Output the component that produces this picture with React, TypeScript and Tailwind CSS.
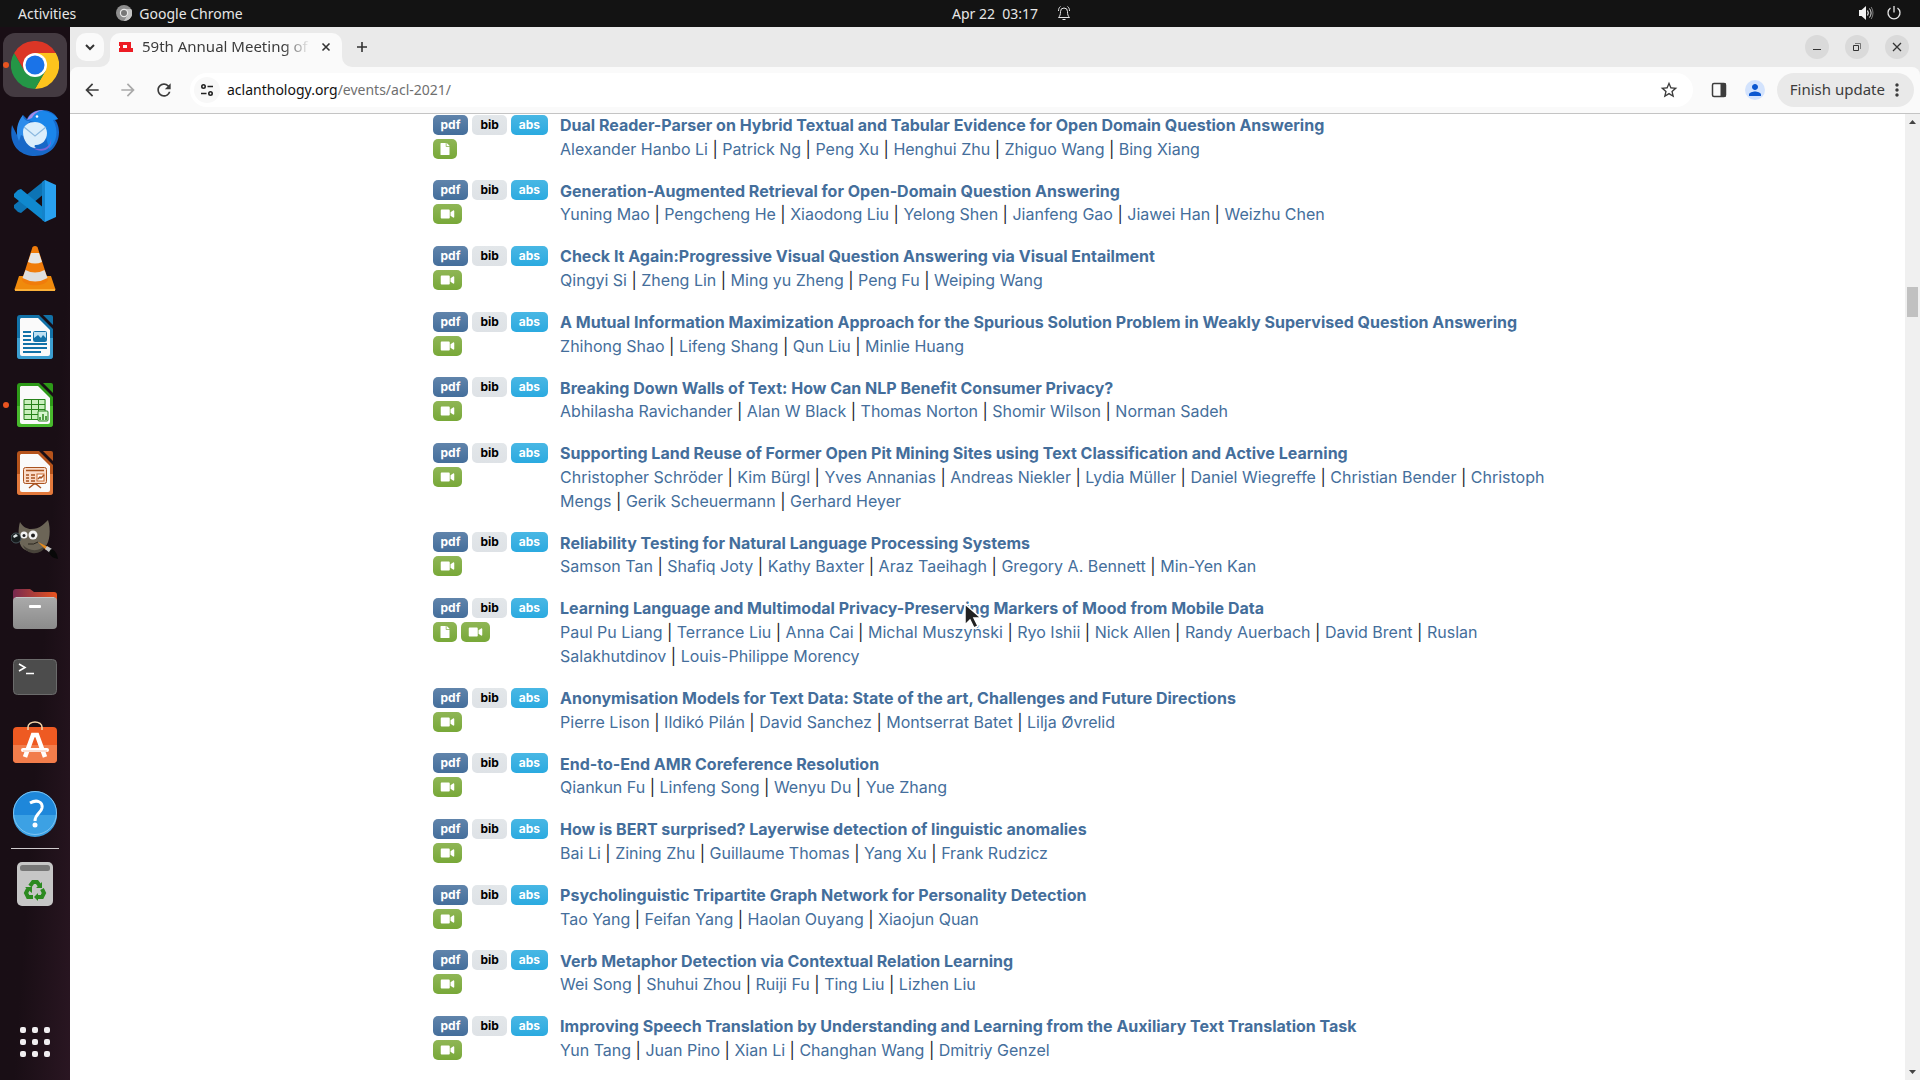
import { Fragment } from "react";
import type { ReactNode } from "react";
import { FaFile, FaVideo } from "react-icons/fa";
import { MdArrowBack, MdArrowForward, MdRefresh, MdStarBorder, MdPerson, MdMoreVert } from "react-icons/md";

type Attachment = "file" | "video";

type Paper = {
  title: string;
  authors: string[];
  attachments: Attachment[];
};

const papers: Paper[] = [
  {
    title: "Dual Reader-Parser on Hybrid Textual and Tabular Evidence for Open Domain Question Answering",
    authors: ["Alexander Hanbo Li", "Patrick Ng", "Peng Xu", "Henghui Zhu", "Zhiguo Wang", "Bing Xiang"],
    attachments: ["file"],
  },
  {
    title: "Generation-Augmented Retrieval for Open-Domain Question Answering",
    authors: ["Yuning Mao", "Pengcheng He", "Xiaodong Liu", "Yelong Shen", "Jianfeng Gao", "Jiawei Han", "Weizhu Chen"],
    attachments: ["video"],
  },
  {
    title: "Check It Again:Progressive Visual Question Answering via Visual Entailment",
    authors: ["Qingyi Si", "Zheng Lin", "Ming yu Zheng", "Peng Fu", "Weiping Wang"],
    attachments: ["video"],
  },
  {
    title:
      "A Mutual Information Maximization Approach for the Spurious Solution Problem in Weakly Supervised Question Answering",
    authors: ["Zhihong Shao", "Lifeng Shang", "Qun Liu", "Minlie Huang"],
    attachments: ["video"],
  },
  {
    title: "Breaking Down Walls of Text: How Can NLP Benefit Consumer Privacy?",
    authors: ["Abhilasha Ravichander", "Alan W Black", "Thomas Norton", "Shomir Wilson", "Norman Sadeh"],
    attachments: ["video"],
  },
  {
    title: "Supporting Land Reuse of Former Open Pit Mining Sites using Text Classification and Active Learning",
    authors: [
      "Christopher Schröder",
      "Kim Bürgl",
      "Yves Annanias",
      "Andreas Niekler",
      "Lydia Müller",
      "Daniel Wiegreffe",
      "Christian Bender",
      "Christoph Mengs",
      "Gerik Scheuermann",
      "Gerhard Heyer",
    ],
    attachments: ["video"],
  },
  {
    title: "Reliability Testing for Natural Language Processing Systems",
    authors: ["Samson Tan", "Shafiq Joty", "Kathy Baxter", "Araz Taeihagh", "Gregory A. Bennett", "Min-Yen Kan"],
    attachments: ["video"],
  },
  {
    title: "Learning Language and Multimodal Privacy-Preserving Markers of Mood from Mobile Data",
    authors: [
      "Paul Pu Liang",
      "Terrance Liu",
      "Anna Cai",
      "Michal Muszyński",
      "Ryo Ishii",
      "Nick Allen",
      "Randy Auerbach",
      "David Brent",
      "Ruslan Salakhutdinov",
      "Louis-Philippe Morency",
    ],
    attachments: ["file", "video"],
  },
  {
    title: "Anonymisation Models for Text Data: State of the art, Challenges and Future Directions",
    authors: ["Pierre Lison", "Ildikó Pilán", "David Sanchez", "Montserrat Batet", "Lilja Øvrelid"],
    attachments: ["video"],
  },
  {
    title: "End-to-End AMR Coreference Resolution",
    authors: ["Qiankun Fu", "Linfeng Song", "Wenyu Du", "Yue Zhang"],
    attachments: ["video"],
  },
  {
    title: "How is BERT surprised? Layerwise detection of linguistic anomalies",
    authors: ["Bai Li", "Zining Zhu", "Guillaume Thomas", "Yang Xu", "Frank Rudzicz"],
    attachments: ["video"],
  },
  {
    title: "Psycholinguistic Tripartite Graph Network for Personality Detection",
    authors: ["Tao Yang", "Feifan Yang", "Haolan Ouyang", "Xiaojun Quan"],
    attachments: ["video"],
  },
  {
    title: "Verb Metaphor Detection via Contextual Relation Learning",
    authors: ["Wei Song", "Shuhui Zhou", "Ruiji Fu", "Ting Liu", "Lizhen Liu"],
    attachments: ["video"],
  },
  {
    title: "Improving Speech Translation by Understanding and Learning from the Auxiliary Text Translation Task",
    authors: ["Yun Tang", "Juan Pino", "Xian Li", "Changhan Wang", "Dmitriy Genzel"],
    attachments: ["video"],
  },
];

function TopBar() {
  return (
    <header className="grid h-[27px] shrink-0 grid-cols-[1fr_auto_1fr] items-center bg-[#131313] pb-px text-[14px] text-[#e6e6e6]">
      <div className="flex items-center">
        <button className="pl-[18px]">Activities</button>
        <button className="ml-10 flex items-center gap-[7px]">
          <svg viewBox="0 0 16 16" className="size-4">
            <circle cx="8" cy="8" r="8" fill="#8e8e8e" />
            <path d="M8 4h7.2A8 8 0 0 1 8 16l3.5-6z" fill="#c4c4c4" />
            <circle cx="8" cy="8" r="4.2" fill="#e8e8e8" />
            <circle cx="8" cy="8" r="3" fill="#777" />
          </svg>
          Google Chrome
        </button>
      </div>
      <button className="ml-[104px] flex items-center">
        <span className="whitespace-pre">Apr 22  03:17</span>
        <svg viewBox="0 0 16 16" className="ml-[18px] size-4" fill="none" stroke="#e6e6e6">
          <path d="M2.5 12.5c1.5-1.500 2-3 2-6a3.500 3.500 0 0 1 7 0c0 3 .5 4.500 2 6z" />
          <path d="M6.500 14.500h3M4.500 1.500C3 2.500 2.500 4 2.500 6M11.500 1.500c1.500 1 2 2.500 2 4.500" />
        </svg>
      </button>
      <div className="flex items-center justify-end gap-[12px] pr-[18px]">
        <button aria-label="Volume">
          <svg viewBox="0 0 16 16" className="size-4" fill="none" stroke="#e6e6e6">
            <path d="M1 5h2.500L8 1v14l-4.500-4H1z" fill="#f2f2f2" stroke="none" />
            <path d="M9.500 5.500q1.600 2.500 0 5" strokeWidth="1.300" />
            <path d="M11.500 3.500q3.200 4.500 0 9" />
            <path d="M13.200 2q3.600 6 0 12" opacity=".5" />
          </svg>
        </button>
        <button aria-label="Power">
          <svg viewBox="0 0 16 16" className="size-4" fill="none" stroke="#e6e6e6" strokeWidth="1.300">
            <path d="M8 1v6.500M4.500 3a6 6 0 1 0 7 0" />
          </svg>
        </button>
      </div>
    </header>
  );
}

function OfficeDoc({ edge, light, children }: { edge: string; light: string; children: ReactNode }) {
  return (
    <>
      <path d="M9 2h19l14 14v27a3 3 0 0 1-3 3H9a3 3 0 0 1-3-3V5a3 3 0 0 1 3-3z" fill={edge} />
      <path d="M6 25h36v18a3 3 0 0 1-3 3H9a3 3 0 0 1-3-3z" fill={light} />
      <path d="M10 5h17l12 12v24a2 2 0 0 1-2 2H11a2 2 0 0 1-2-2V6z" fill="#fafafa" />
      <path d="M32 2h8a2 2 0 0 1 2 2v8z" fill={edge} />
      {children}
    </>
  );
}

function Chrome() {
  return (
    <>
      <path d="M24 24L3.200 12A24 24 0 0 1 44.800 12z" fill="#dc3626" />
      <path d="M24 24V12h20.800A24 24 0 0 1 24 48l10.400-18z" fill="#fdc41d" />
      <path d="M24 24l10.400 6L24 48A24 24 0 0 1 3.200 12l10.400 18z" fill="#249646" />
      <path d="M3.200 12h41.600H24L13.600 30z" fill="#dc3626" />
      <circle cx="24" cy="24" r="12" fill="#fff" />
      <circle cx="24" cy="24" r="9.500" fill="#1a73e8" />
    </>
  );
}

function Thunderbird() {
  return (
    <>
      <path d="M1 16c-4 20 8 31 23 31 15 0 24-11 24-24 0-5-2-10-4-12l3-1C44 4 38 1 31 1c-8 0-13 4-15 9L12 6c-2 4-1 8 0 11L6 26z" fill="#1768c8" />
      <path d="M12 6c-6 7-8 17-4 26l2-6 4 2c-1-7 2-13 5-16-4 0-7-2-7-6z" fill="#2d8ceb" />
      <path d="M17 11C21 3 28 0 34 2c7 2 11 5 13 8l-5 1c6 10 4 23-4 29l-6-24z" fill="#1a86ea" />
      <path d="M16 11C20 3 26 1 33 1c-7 1-10 4-12 8z" fill="#a58be8" />
      <path d="M40 29c0 9-7 13-18 10 8 6 20 2 18-10z" fill="#7968d8" />
      <path d="M12 23c0-7 6-10 12-10s12 4 12 11-5 12-11 12c-2 0-2 2 0 3-8 0-13-8-13-16z" fill="#dbeefb" />
      <path d="M13 18l11 9 11-9" fill="none" stroke="#8bb9df" strokeWidth="1.200" />
      <circle cx="26" cy="7.500" r="1.300" fill="#fff" />
    </>
  );
}

function Code() {
  return (
    <>
      <path d="M34 3v13L10 36l-3-1-4-4v-3z" fill="#0d74b5" />
      <path d="M34 45V32L10 12l-3 1-4 4v3z" fill="#1089cf" />
      <path d="M34 3l11 5v32l-11 5z" fill="#29a1ef" />
      <path d="M34 3v42l-3-2V5z" fill="#1383cb" />
    </>
  );
}

function Vlc() {
  return (
    <>
      <path d="M8 31h32l4 12a2 2 0 0 1-1 3H5a2 2 0 0 1-1-3z" fill="#f08a0c" />
      <path d="M4 44h40v2H4z" fill="#fbb13a" />
      <path d="M21.500 2q2.500-2 5 0L37 35c-3 7-23 7-26 0z" fill="#f07c0b" />
      <path d="M20 8h8l3 9q-7 3-14 0z" fill="#e6e6e6" />
      <path d="M14.500 25q9.500 5 19 0l3 8q-12 7-25 0z" fill="#dedede" />
    </>
  );
}

function Writer() {
  return (
    <OfficeDoc edge="#1272a8" light="#3c9ed0">
      <path d="M12 19h8M12 23h8M12 27h8M12 31h24M12 35h24M12 39h18" stroke="#1272a8" strokeWidth="2" />
      <rect x="22.500" y="18.500" width="13" height="10" rx="1" fill="#bde0f2" stroke="#1272a8" />
      <path d="M23 28v-3l4-3 3 3 2-3 3 3v3z" fill="#1272a8" />
    </OfficeDoc>
  );
}

function Calc() {
  return (
    <OfficeDoc edge="#2d9a18" light="#48b92d">
      <rect x="13" y="18" width="22" height="21" fill="#c9efbd" />
      <path d="M13 18.500h21v20H13zM13 23.500h21M13 28.500h21M13 33.500h21M20.500 18v20M27.500 18v20" stroke="#27821a" fill="none" />
      <rect x="27" y="30" width="10" height="10" rx="1" fill="#d8f6cf" stroke="#27821a" />
      <path d="M29 39v-3M32 39v-6M35 39v-4" stroke="#27821a" strokeWidth="1.500" />
    </OfficeDoc>
  );
}

function Impress() {
  return (
    <OfficeDoc edge="#b5531b" light="#e2793c">
      <rect x="12.500" y="18.500" width="23" height="16" rx="2" fill="#fbdcc9" stroke="#a8521f" />
      <path d="M15 21.500h18M20 26h4M20 29h4M20 32h4M15 26h3M15 29h3M15 32h3" stroke="#a8521f" strokeWidth="1.500" />
      <rect x="26" y="25" width="7" height="7" fill="#fff" stroke="#c96a31" />
      <path d="M27 30l2-2 1 1 3-3M18 39l5-4h2l5 4" fill="none" stroke="#a8521f" strokeWidth="1.500" />
    </OfficeDoc>
  );
}

function Gimp() {
  return (
    <g transform="translate(0 2)">
      <path d="M9 3c3 5 7 7 11 7 9 0 13-5 17-9 3 9 2 22-3 27-6 7-20 6-24-1-3-6-3-18-1-24z" fill="#6c6557" />
      <path d="M12 26c6 7 18 7 23-1-2 8-9 10-14 9s-8-4-9-8z" fill="#48433a" />
      <circle cx="5" cy="19" r="5" fill="#171b1d" stroke="#46545a" />
      <path d="M2 17l3-2 2 2-4 2z" fill="#dfe6e8" />
      <circle cx="13" cy="16" r="3.500" fill="#f3f3f3" />
      <circle cx="22" cy="16" r="4.500" fill="#f3f3f3" />
      <circle cx="13" cy="16.500" r="1.500" fill="#222" />
      <circle cx="22" cy="16.500" r="2" fill="#222" />
      <path d="M17 25q6 1 10-2" fill="none" stroke="#2a261f" />
      <path d="M27 23l10 5-2 3z" fill="#e78b1e" />
      <path d="M36 27l5 3-2 4-5-4z" fill="#c7c7c7" />
      <path d="M40 30c4 1 6 4 7 10-5-1-8-3-9-7z" fill="#080808" />
    </g>
  );
}

function Files() {
  return (
    <>
      <defs>
        <linearGradient id="folder-back">
          <stop stopColor="#77294f" />
          <stop offset="1" stopColor="#e9541f" />
        </linearGradient>
        <linearGradient id="folder-front" x2="0" y2="1">
          <stop stopColor="#aaa" />
          <stop offset="1" stopColor="#8b8b8b" />
        </linearGradient>
      </defs>
      <path d="M2 7a3 3 0 0 1 3-3h14l4 3h20a3 3 0 0 1 3 3v10H2z" fill="url(#folder-back)" />
      <rect x="2" y="12" width="44" height="32" rx="4" fill="url(#folder-front)" />
      <path d="M5 12.500h38" stroke="#c5c5c5" />
      <rect x="18" y="20" width="12" height="3" rx="1" fill="#fff" />
    </>
  );
}

function Terminal() {
  return (
    <>
      <rect x="2.500" y="6.500" width="43" height="35" rx="4" fill="#4c4c4c" stroke="#6b6b6b" />
      <path d="M8 11l6 3.500L8 18M15 20.500h8" fill="none" stroke="#fff" strokeWidth="1.600" />
    </>
  );
}

function Software() {
  return (
    <>
      <path d="M17 9V6a7 5 0 0 1 14 0v3" fill="none" stroke="#f5d5ab" strokeWidth="1.500" />
      <rect x="2" y="6" width="44" height="36" rx="4" fill="#ee5a22" />
      <path d="M2 24h44v14a4 4 0 0 1-4 4H6a4 4 0 0 1-4-4z" fill="#f27d4b" />
      <path d="M17 9V6M31 9V6" stroke="#f5d5ab" strokeWidth="1.500" />
      <path d="M14 36l8-22h4l8 22" fill="none" stroke="#fff" strokeWidth="4.500" />
      <path d="M12 29h24" stroke="#fff" strokeWidth="4" strokeLinecap="round" />
      <path d="M12 30h24" stroke="#f3a27f" strokeWidth=".7" />
    </>
  );
}

function Help() {
  return (
    <>
      <circle cx="24" cy="24" r="22" fill="#1e87da" />
      <path d="M2 26a22 22 0 0 0 44 0z" fill="#3ca1e4" />
      <circle cx="24" cy="24" r="21.500" fill="none" stroke="#7fc4f1" />
      <path d="M19 14c7-4 13-1 12 5-1 5-7 6-7 13" fill="none" stroke="#fff" strokeWidth="3" />
      <circle cx="24" cy="36" r="2.500" fill="#fff" />
    </>
  );
}

function Trash() {
  return (
    <>
      <rect x="6" y="2" width="36" height="44" rx="5" fill="#c6c6c6" />
      <rect x="9" y="5" width="30" height="6" rx="2.500" fill="#777" />
      <g fill="none" stroke="#2c8a20" strokeWidth="4">
        <path d="M19 26l3-4h4l3 4M31 29l2 4-2 4h-5M22 37h-5l-2-4 2-4" />
      </g>
      <path d="M31 22v6h-6zM27 33v8l-4-4zM14 27h7v6z" fill="#2c8a20" />
    </>
  );
}

const dockApps: { name: string; icon: ReactNode; running?: boolean; active?: boolean }[] = [
  { name: "Google Chrome", icon: <Chrome />, running: true, active: true },
  { name: "Thunderbird Mail", icon: <Thunderbird /> },
  { name: "Visual Studio Code", icon: <Code /> },
  { name: "VLC media player", icon: <Vlc /> },
  { name: "LibreOffice Writer", icon: <Writer /> },
  { name: "LibreOffice Calc", icon: <Calc />, running: true },
  { name: "LibreOffice Impress", icon: <Impress /> },
  { name: "GIMP", icon: <Gimp /> },
  { name: "Files", icon: <Files /> },
  { name: "Terminal", icon: <Terminal /> },
  { name: "Software", icon: <Software /> },
  { name: "Help", icon: <Help /> },
];

function Dock() {
  return (
    <nav className="flex w-[70px] shrink-0 flex-col items-center bg-linear-to-br from-[#190e15] from-60% to-[#2a1622] py-[6px]">
      <div className="flex flex-col gap-1">
        {dockApps.map((app) => (
          <button
            key={app.name}
            aria-label={app.name}
            className={`relative flex size-16 items-center justify-center rounded-[12px] ${app.active ? "bg-[#443a41]" : ""}`}
          >
            {app.running && <span className="absolute left-0 size-[6px] rounded-full bg-[#e95420]" />}
            <svg viewBox="0 0 48 48" className="size-12">
              {app.icon}
            </svg>
          </button>
        ))}
      </div>
      <hr className="my-[3px] w-12 border-[#cfcbcd]" />
      <button aria-label="Trash" className="flex size-16 items-center justify-center">
        <svg viewBox="0 0 48 48" className="size-12">
          <Trash />
        </svg>
      </button>
      <button aria-label="Show Applications" className="mt-auto flex size-16 items-center justify-center">
        <span className="grid grid-cols-3 gap-[6px]">
          {Array.from({ length: 9 }, (_, i) => (
            <span key={i} className="size-[6px] rounded-[2px] bg-[#f0eef0]" />
          ))}
        </span>
      </button>
    </nav>
  );
}

function TabStrip() {
  return (
    <div className="flex h-10 shrink-0 items-start bg-[#eaeaea] pt-[6px] text-[#3c3c3c]">
      <button aria-label="Search tabs" className="ml-[6px] flex size-7 items-center justify-center rounded-[10px] bg-[#fafafa]">
        <svg viewBox="0 0 12 12" className="size-3" fill="none" stroke="#333" strokeWidth="2">
          <path d="M2 4l4 4 4-4" />
        </svg>
      </button>
      <svg viewBox="0 0 10 10" className="ml-[-4px] size-[10px] self-end" fill="#fafafa">
        <path d="M10 0v10H0A10 10 0 0 0 10 0z" />
      </svg>
      <div className="flex h-full w-[232px] items-start rounded-t-[10px] bg-[#fafafa] pl-[9px]">
        <svg viewBox="0 0 14 14" className="mt-[7px] size-[14px]" fill="#ed1c24">
          <path fillRule="evenodd" d="M0 2h12v6h2v4H0V8h1V6H0zM4 5v3h4V5z" />
        </svg>
        <span className="ml-[9px] w-[168px] overflow-hidden mask-r-from-84% pb-px whitespace-nowrap text-[15px]/[26px]">
          59th Annual Meeting of t
        </span>
        <button aria-label="Close tab" className="ml-2 flex h-7 w-4 items-center justify-center">
          <svg viewBox="0 0 10 10" className="size-[10px]" fill="none" stroke="#333" strokeWidth="1.600">
            <path d="M1.500 1.500l7 7M8.500 1.500l-7 7" />
          </svg>
        </button>
      </div>
      <svg viewBox="0 0 10 10" className="size-[10px] self-end" fill="#fafafa">
        <path d="M0 0v10h10A10 10 0 0 1 0 0z" />
      </svg>
      <button aria-label="New tab" className="-ml-1 flex size-7 items-center justify-center">
        <svg viewBox="0 0 12 12" className="size-3" fill="none" stroke="#333" strokeWidth="1.600">
          <path d="M6 1v10M1 6h10" />
        </svg>
      </button>
      <div className="mr-[11px] ml-auto flex gap-4 pt-[2px]">
        <button aria-label="Minimize" className="flex size-6 items-center justify-center rounded-full bg-[#dadada]">
          <svg viewBox="0 0 12 12" className="size-3" stroke="#333">
            <path d="M2 8.500h8" />
          </svg>
        </button>
        <button aria-label="Restore" className="flex size-6 items-center justify-center rounded-full bg-[#dadada]">
          <svg viewBox="0 0 12 12" className="size-3" fill="none" stroke="#333">
            <path d="M2.500 4.500h5v5h-5z" />
            <path d="M4 2.500h5.500V8" opacity=".6" />
          </svg>
        </button>
        <button aria-label="Close" className="flex size-6 items-center justify-center rounded-full bg-[#dadada]">
          <svg viewBox="0 0 12 12" className="size-3" stroke="#333" strokeWidth="1.300">
            <path d="M2 2l8 8M10 2l-8 8" />
          </svg>
        </button>
      </div>
    </div>
  );
}

function Toolbar() {
  return (
    <div className="bg-[#eaeaea]">
      <div className="flex h-[47px] items-center rounded-t-[8px] border-b border-[#c4c4c4] bg-[#fafafa] pr-[6px] pl-3 text-[#3c3c3c]">
        <button aria-label="Back" className="mr-4">
          <MdArrowBack size={20} />
        </button>
        <button aria-label="Forward" className="mr-4 text-[#a9a9a9]">
          <MdArrowForward size={20} />
        </button>
        <button aria-label="Reload">
          <MdRefresh size={20} />
        </button>
        <div className="ml-4 flex h-[34px] flex-1 items-center rounded-full bg-white pr-[14px] pl-[4px]">
          <button aria-label="View site information" className="flex size-[26px] items-center justify-center rounded-full bg-[#f8f8f8]">
            <svg viewBox="0 0 14 14" className="size-[14px]" fill="none" stroke="#222" strokeWidth="1.600">
              <circle cx="3.500" cy="3.500" r="1.700" />
              <path d="M7.500 3.500H13M1 10.500h5.500" />
              <circle cx="10.500" cy="10.500" r="1.700" />
            </svg>
          </button>
          <button className="ml-[7px] flex-1 cursor-text pb-px text-left text-[14px] text-[#6f6f6f]">
            <span className="text-[#111]">aclanthology.org</span>/events/acl-2021/
          </button>
          <button aria-label="Bookmark this tab">
            <MdStarBorder size={20} />
          </button>
        </div>
        <button aria-label="Side panel" className="ml-[18px]">
          <svg viewBox="0 0 16 16" className="size-4">
            <rect x="1.500" y="1.500" width="13" height="13" rx="1.500" fill="none" stroke="#3c3c3c" strokeWidth="1.500" />
            <path d="M9.500 1.500H15v13H9.500z" fill="#3c3c3c" />
          </svg>
        </button>
        <button aria-label="Profile" className="ml-[18px] flex size-5 items-center justify-center rounded-full bg-[#d3e3fd] text-[#0b57d0]">
          <MdPerson size={18} />
        </button>
        <button className="ml-[12px] flex h-[34px] items-center gap-[2px] rounded-full bg-[#e9e9e9] pr-[7px] pb-px pl-[13px] text-[15px] whitespace-nowrap">
          Finish update
          <MdMoreVert size={20} />
        </button>
      </div>
    </div>
  );
}

const badge = "mr-1 inline-block rounded-[5px] bg-linear-to-b py-1 text-center align-middle text-[12px]/3 font-bold";

function AttachmentBadge({ kind }: { kind: Attachment }) {
  return (
    <a href="#" aria-label={kind} className={`${badge} from-[#8fb655] to-[#78a838] px-[7px] text-white`}>
      {kind === "file" ? <FaFile className="h-3 w-[10px]" /> : <FaVideo className="h-3 w-[15px]" />}
    </a>
  );
}

function PaperRow({ paper }: { paper: Paper }) {
  return (
    <li className="mb-4 flex">
      <span className="mr-2 shrink-0 whitespace-nowrap">
        <a href="#" className={`${badge} from-[#6084ab] to-[#446e9b] px-2 text-white`}>pdf</a>
        <a href="#" className={`${badge} from-[#e3e7ea] to-[#dee2e6] px-2 text-black`}>bib</a>
        <a href="#" className={`${badge} from-[#48b7e4] to-[#2aaae0] px-2 text-white`}>abs</a>
        <br />
        {paper.attachments.map((kind) => (
          <AttachmentBadge key={kind} kind={kind} />
        ))}
      </span>
      <span>
        <strong>
          <a href="#" className="align-middle text-[#446e9b]">
            {paper.title}
          </a>
        </strong>
        <br />
        {paper.authors.map((author, i) => (
          <Fragment key={author}>
            {i > 0 && <>&nbsp;| </>}
            <a href="#" className="text-[#446e9b]">
              {author}
            </a>
          </Fragment>
        ))}
      </span>
    </li>
  );
}

function Scrollbar() {
  return (
    <div className="flex w-[15px] shrink-0 flex-col items-center bg-[#f0f0f0]">
      <svg viewBox="0 0 15 16" className="h-4 w-[15px]" fill="#444">
        <path d="M7.500 6L11 10H4z" />
      </svg>
      <div className="mt-[157px] h-[30px] w-[11px] bg-[#c1c1c1]" />
      <svg viewBox="0 0 15 16" className="mt-auto h-4 w-[15px]" fill="#444">
        <path d="M7.500 10L11 6H4z" />
      </svg>
    </div>
  );
}

export default function App() {
  return (
    <div className="relative flex h-screen flex-col overflow-hidden font-['Noto_Sans',sans-serif]">
      <TopBar />
      <div className="flex min-h-0 flex-1">
        <Dock />
        <div className="flex min-w-0 flex-1 flex-col">
          <TabStrip />
          <Toolbar />
          <div className="flex min-h-0 flex-1 bg-white">
            <main className="flex-1 overflow-hidden font-['Inter',sans-serif] text-[16px]/6 text-[#212529]">
              <ul className="mx-auto -mt-[3px] max-w-[1140px] pr-2 pl-[15px]">
                {papers.map((paper) => (
                  <PaperRow key={paper.title} paper={paper} />
                ))}
              </ul>
            </main>
            <Scrollbar />
          </div>
        </div>
      </div>
      <svg viewBox="0 0 20 28" className="pointer-events-none absolute top-[602px] left-[963px] h-7 w-5">
        <path d="M2 2v21l5-5 4 8 4-2-4-8h7z" fill="#222" stroke="#fff" strokeWidth="1.500" />
      </svg>
    </div>
  );
}
